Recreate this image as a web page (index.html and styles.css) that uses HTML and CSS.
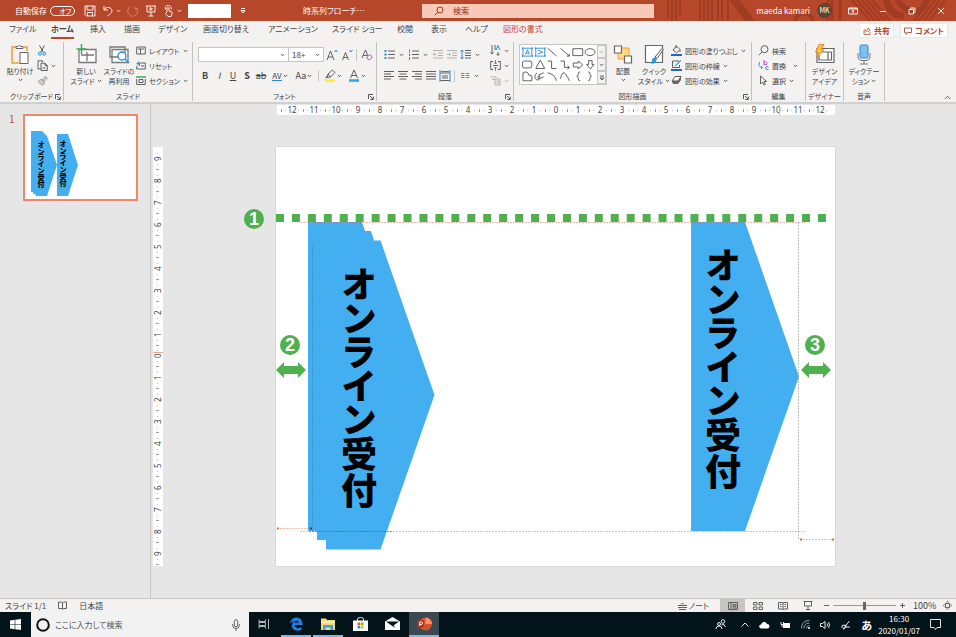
FILE: index.html
```html
<!DOCTYPE html>
<html lang="ja">
<head>
  <meta charset="UTF-8" />
  <meta name="viewport" content="width=device-width, initial-scale=1.0" />
  <title>時系列フローチャート - PowerPoint</title>
  <link rel="stylesheet" href="styles.css">
</head>
<body>
  <!-- shared icons -->
  <svg class="defs" aria-hidden="true">
    <symbol id="chev" viewBox="0 0 5 4"><path d="M.8 1 2.5 2.7 4.2 1" fill="none" stroke="currentColor" stroke-width=".9"/></symbol>
    <symbol id="launch" viewBox="0 0 6 6"><path d="M.5 5V.5H5M2 2l3 3M5.3 2.5v3h-3" fill="none" stroke="#444" stroke-width=".9"/></symbol>
    <symbol id="arrow" viewBox="0 0 30 16"><path d="M0 8 8 0v4h14V0l8 8-8 8v-4H8v4z" fill="#4fb04f"/></symbol>
  </svg>

  <header class="titlebar">
    <svg class="deco" viewBox="0 0 300 21" preserveAspectRatio="xMaxYMid slice" aria-hidden="true">
      <g fill="none" stroke="#a03c22" stroke-width="2">
        <path d="M12 0v18M16 0v21M20 0v21M24 0v15M44 0v21M48 0v21M52 0v21M56 0v21M62 0v21M66 0v21M72 0v21"/>
        <path d="M76 0 92 21M81 0 97 21" stroke-width="4"/>
        <circle cx="148" cy="22" r="9" stroke-width="4"/>
        <path d="M172 0v21M176 0v21M184 0v21" stroke-width="3"/>
        <path d="M196 0l18 21M201 0l18 21M206 0l18 21M211 0l18 21M216 0l18 21M258 21l16-21M263 21l16-21M268 21l16-21M273 21l16-21"/>
        <path d="M230 0q4 16 18 16" stroke-width="7"/><path d="M241 0q20 24 30 0" stroke-width="6"/>
      </g>
    </svg>
    <div class="quick">
      <label class="autosave">自動保存
        <input type="checkbox"><span class="switch">オフ</span>
      </label>
      <button aria-label="上書き保存"><svg width="12" height="12" viewBox="0 0 12 12"><path d="M1 1h10v10H2.500L1 9.500zM3 1v4h6V1M3.500 11V7.500h5V11" class="w"/></svg></button>
      <button class="drop" aria-label="元に戻す"><svg width="12" height="12" viewBox="0 0 12 12"><path d="M2 1v4h4M2 5c2-4 8-3 8 1 0 2-2 3-4.500 5" class="w"/></svg><svg class="chev"><use href="#chev"/></svg></button>
      <button class="dim" aria-label="やり直し"><svg width="12" height="12" viewBox="0 0 12 12"><path d="M8 1.500V4h3M9 2.500A5 5 0 1 1 3 2" class="w"/></svg></button>
      <button aria-label="スライドショー"><svg width="12" height="12" viewBox="0 0 12 12"><path d="M1 1h10M2 1v6h8V1M6 7v4M3.500 11h5M5 2.500v3L7.500 4z" class="w"/></svg></button>
      <button class="drop" aria-label="タッチ"><svg width="12" height="12" viewBox="0 0 12 12"><path d="M4 7V3q1-1 2 0v3l3 1v2l-1 2.500H5L2.500 8.500zM2.500 4.500A3 3 0 1 1 8 4.500" class="w"/></svg><svg class="chev"><use href="#chev"/></svg></button>
      <input class="quick-box" type="text" aria-label="フォント サイズ">
      <button class="quick-more" aria-label="クイック アクセスのユーザー設定"><svg width="6" height="6" viewBox="0 0 6 6"><path d="M1 .5h4M1 2.500h4L3 5z" class="w"/></svg></button>
    </div>
    <div class="doc-title">時系列フローチ…</div>
    <label class="search">
      <svg width="10" height="10" viewBox="0 0 10 10"><path d="M.8 9.200 4 6" stroke="#a33a22"/><circle cx="6" cy="4" r="3" fill="none" stroke="#a33a22"/></svg>
      <input type="search" placeholder="検索">
    </label>
    <div class="account">
      <span>maeda kamari</span>
      <span class="avatar">MK</span>
    </div>
    <div class="window-buttons">
      <button aria-label="リボンの表示オプション"><svg width="10" height="8" viewBox="0 0 10 8"><path d="M.5 1h9v6h-9zM.5 2h9M5 6V3.500M3.700 4.700 5 3.500l1.300 1.200" class="w"/></svg></button>
      <button aria-label="最小化"><svg width="8" height="8" viewBox="0 0 8 8"><path d="M1 4.500h6" class="w"/></svg></button>
      <button aria-label="元に戻す"><svg width="8" height="8" viewBox="0 0 8 8"><path d="M1 2.500h4.500V7H1zM2.500 2.500V1H7v4.500H5.500" class="w"/></svg></button>
      <button aria-label="閉じる"><svg width="8" height="8" viewBox="0 0 8 8"><path d="m1 1 6 6M7 1 1 7" class="w"/></svg></button>
    </div>
  </header>

  <nav class="tabs">
    <div class="tab-list">
      <button>ファイル</button>
      <button class="active">ホーム</button>
      <button>挿入</button>
      <button>描画</button>
      <button>デザイン</button>
      <button>画面切り替え</button>
      <button>アニメーション</button>
      <button>スライド ショー</button>
      <button>校閲</button>
      <button>表示</button>
      <button>ヘルプ</button>
      <button class="context">図形の書式</button>
    </div>
    <div class="tab-actions">
      <button><svg width="8" height="8" viewBox="0 0 8 8"><path d="M3 3H1v4.500h6V5M2.500 5.500C3 3 4 2.500 5 2.500V1l2.300 2L5 5V3.800" fill="none" stroke="#b7472a" stroke-width=".8"/></svg>共有</button>
      <button><svg width="8" height="8" viewBox="0 0 8 8"><path d="M.5 1h7v4.500h-4l-1.500 2v-2H.5z" fill="none" stroke="#b7472a" stroke-width=".9"/></svg>コメント</button>
    </div>
  </nav>

  <section class="ribbon">
    <div class="group">
      <div class="group-body clipboard">
        <button class="big"><svg width="20" height="21" viewBox="0 0 20 21"><path d="M6 3H2v16h8M14 3h3v4" fill="none" stroke="#f0a030" stroke-width="1.500"/><path d="M6 4.500V2.500h2q1-2.500 3 0h2v2z" fill="#fff" stroke="#666"/><path d="M10 8.500h8v11h-8z" fill="#fff" stroke="#666"/></svg>貼り付け<svg class="chev"><use href="#chev"/></svg></button>
        <div class="stack">
          <button aria-label="切り取り"><svg width="10" height="11" viewBox="0 0 10 11"><path d="m2.500.5 4 7M7.500.5l-4 7" stroke="#555"/><circle cx="2.800" cy="8.700" r="1.500" fill="none" stroke="#2b88d8"/><circle cx="7.200" cy="8.700" r="1.500" fill="none" stroke="#2b88d8"/></svg></button>
          <button aria-label="コピー"><svg width="11" height="11" viewBox="0 0 11 11"><path d="M4 9H1V.8h4.500V2M4 3.200h4l2.300 2.300v5H4zM8 3.500v2h2M5.500 8h3" class="l"/></svg><svg class="chev"><use href="#chev"/></svg></button>
          <button aria-label="書式のコピー"><svg width="11" height="10" viewBox="0 0 11 10"><path d="M1 5.500 4 3l4 4-3 2.500zM5 4l3-3.500L10.500 2 7.500 5.500z" fill="#ccc" stroke="#999" stroke-width=".8"/></svg></button>
        </div>
      </div>
      <div class="group-label">クリップボード<svg class="launch"><use href="#launch"/></svg></div>
    </div>

    <div class="group">
      <div class="group-body slides">
        <button class="big"><svg width="21" height="21" viewBox="0 0 21 21"><path d="M3 5.500h17v13H3zM5 11h13M11 8v9" fill="#fff" stroke="#777" stroke-width="1.300"/><path d="M5.500 0v10M.5 5h10" stroke="#3cae5c" stroke-width="1.500"/></svg>新しい<span>スライド <svg class="chev"><use href="#chev"/></svg></span></button>
        <button class="big"><svg width="21" height="21" viewBox="0 0 21 21"><path d="M1 3h15v10H1zM3 5.500h16v13H3z" fill="#fff" stroke="#777" stroke-width="1.300"/><circle cx="13" cy="12" r="4" fill="#fff" stroke="#2b88d8" stroke-width="1.300"/><path d="m16 15 4 4" stroke="#2b88d8" stroke-width="1.500"/></svg>スライドの<span>再利用</span></button>
        <div class="stack">
          <button><svg width="10" height="9" viewBox="0 0 10 9"><path d="M.7 1h8.600v7H.7zM2 3h6M4.500 3v5" class="l"/></svg>レイアウト<svg class="chev"><use href="#chev"/></svg></button>
          <button><svg width="10" height="9" viewBox="0 0 10 9"><path d="M3 2h6.300v6H.7V5M5 5h3" class="l"/><path d="M3 .5.800 2.500 3 4.500M1 2.500h2.500V5" fill="none" stroke="#2b88d8"/></svg>リセット</button>
          <button><svg width="10" height="9" viewBox="0 0 10 9"><path d="M0 1h10" stroke="#3cae5c" stroke-width="1.500"/><path d="M.7 3v5.500h8.600V3M3 3.500h4v3H3z" class="l"/></svg>セクション<svg class="chev"><use href="#chev"/></svg></button>
        </div>
      </div>
      <div class="group-label">スライド</div>
    </div>

    <div class="group">
      <div class="group-body rows">
        <div class="row">
          <div class="combo font-name"><select aria-label="フォント"><option></option></select><svg class="chev"><use href="#chev"/></svg></div>
          <div class="combo font-size"><select aria-label="フォント サイズ"><option>18+</option></select><svg class="chev"><use href="#chev"/></svg></div>
          <button class="glyph" aria-label="拡大"><svg width="12" height="12" viewBox="0 0 12 12"><path d="M1 11 4.500 2 8 11M2.200 8h4.600" class="l"/><path d="m8.500 3 1.500-2 1.500 2" fill="none" stroke="#2b88d8"/></svg></button>
          <button class="glyph" aria-label="縮小"><svg width="12" height="12" viewBox="0 0 12 12"><path d="M1.500 11 4.500 3.500 7.500 11M2.600 8.500h3.800" class="l"/><path d="m8.500 1 1.500 2 1.500-2" fill="none" stroke="#2b88d8"/></svg></button>
          <i class="bar"></i>
          <button class="glyph" aria-label="書式のクリア"><svg width="12" height="12" viewBox="0 0 12 12"><path d="M1 9 4.500 1 7 7M2.200 6.500H6" class="l"/><path d="m5.500 9 3-3.500L11.300 8l-3 3z" fill="#fff" stroke="#b146c2"/></svg></button>
        </div>
        <div class="row second">
          <button class="fmt"><b>B</b></button>
          <button class="fmt"><i>I</i></button>
          <button class="fmt"><u>U</u></button>
          <button class="fmt"><b>S</b></button>
          <button class="fmt"><s>ab</s></button>
          <button class="fmt wide"><span class="spacing">AV</span><svg class="chev"><use href="#chev"/></svg></button>
          <button class="fmt wide">Aa<svg class="chev"><use href="#chev"/></svg></button>
          <i class="bar"></i>
          <button class="fmt wide" aria-label="蛍光ペン"><svg width="12" height="13" viewBox="0 0 12 13"><path d="M3 8.500 4 5l4.500-4L11 3.500 6.500 8zM4 5l2.500 3M1.500 9.500 3 7" class="l"/><path d="M1 11.500h10" stroke="#ffee22" stroke-width="2.500"/></svg><svg class="chev"><use href="#chev"/></svg></button>
          <button class="fmt wide" aria-label="フォントの色"><svg width="12" height="13" viewBox="0 0 12 13"><path d="M2.500 9 6 1l3.500 8M3.700 6.500h4.600" class="l"/><path d="M1 11.500h10" stroke="#2ea3ef" stroke-width="2.500"/></svg><svg class="chev"><use href="#chev"/></svg></button>
        </div>
      </div>
      <div class="group-label">フォント<svg class="launch"><use href="#launch"/></svg></div>
    </div>

    <div class="group">
      <div class="group-body paragraph">
        <div class="rows">
          <div class="row">
            <button class="par drop" aria-label="箇条書き"><svg width="11" height="11" viewBox="0 0 11 11"><path d="M4 2h7M4 5.500h7M4 9h7" class="l"/><path d="M.5 2h2M.5 5.500h2M.5 9h2" stroke="#2b88d8" stroke-width="2"/></svg><svg class="chev"><use href="#chev"/></svg></button>
            <button class="par drop" aria-label="段落番号"><svg width="11" height="11" viewBox="0 0 11 11"><path d="M4 2h7M4 5.500h7M4 9h7" class="l"/><path d="M1.500.5v3M1.500 4.500v2.500M1.500 8v3" stroke="#2b88d8"/></svg><svg class="chev"><use href="#chev"/></svg></button>
            <button class="par off" aria-label="インデントを減らす"><svg width="11" height="11" viewBox="0 0 11 11"><path d="M1 1.500h10M6 4h5M6 6.500h5M1 9h10M4.500 5.300H1M2.500 4 1 5.300l1.500 1.300" class="g"/></svg></button>
            <button class="par off" aria-label="インデントを増やす"><svg width="11" height="11" viewBox="0 0 11 11"><path d="M1 1.500h10M6 4h5M6 6.500h5M1 9h10M1 5.300h3.500M3 4l1.500 1.300L3 6.600" class="g"/></svg></button>
            <button class="par drop" aria-label="行間"><svg width="11" height="11" viewBox="0 0 11 11"><path d="M5 1.500h6M5 4h6M5 6.500h6M5 9h6" class="l"/><path d="M2 1v9M.5 2.500 2 1l1.500 1.500M.5 8.500 2 10l1.500-1.500" fill="none" stroke="#2b88d8"/></svg><svg class="chev"><use href="#chev"/></svg></button>
          </div>
          <div class="row second">
            <button class="par" aria-label="左揃え"><svg width="10" height="11" viewBox="0 0 10 11"><path d="M0 1.500h10M0 4h7M0 6.500h10M0 9h7" class="l"/></svg></button>
            <button class="par" aria-label="中央揃え"><svg width="10" height="11" viewBox="0 0 10 11"><path d="M0 1.500h10M1.500 4h7M0 6.500h10M1.500 9h7" class="l"/></svg></button>
            <button class="par" aria-label="右揃え"><svg width="10" height="11" viewBox="0 0 10 11"><path d="M0 1.500h10M3 4h7M0 6.500h10M3 9h7" class="l"/></svg></button>
            <button class="par" aria-label="両端揃え"><svg width="10" height="11" viewBox="0 0 10 11"><path d="M0 1.500h10M0 4h10M0 6.500h10M0 9h10" class="l"/></svg></button>
            <button class="par" aria-label="均等割り付け"><svg width="12" height="12" viewBox="0 0 12 12"><path d="M1 0v12M11 0v12" stroke="#2b88d8"/><path d="M1.500 3h9M3 6h6M3 8h6M1.500 10.500h9" class="l"/><path d="M2 1.500h8" stroke="#2b88d8"/></svg></button>
            <i class="bar"></i>
            <button class="par drop" aria-label="段組み"><svg width="10" height="11" viewBox="0 0 10 11"><path d="M1 3.500h3.500M5.800 3.500h3.500M1 5.500h3.500M5.800 5.500h3.500M1 7.500h3.500M5.800 7.500h3.500" stroke="#2b88d8" stroke-width=".9"/></svg><svg class="chev"><use href="#chev"/></svg></button>
          </div>
        </div>
        <div class="stack">
          <button aria-label="文字列の方向"><svg width="11" height="11" viewBox="0 0 11 11"><path d="M2 0v9M.5 7.500 2 9l1.500-1.500M5 0v5M8 7v3M6.500 9 8 10.500 9.500 9" class="l"/><path d="M6 5 8 .5 10 5" fill="none" stroke="#2b88d8"/></svg><svg class="chev"><use href="#chev"/></svg></button>
          <button aria-label="文字の配置"><svg width="11" height="11" viewBox="0 0 11 11"><path d="M3 1.500H.7v8H3M8 1.500h2.300v8H8M3 5.500h5" class="l"/><path d="M5.500 0v4M4 2.500l1.500 1.500L7 2.500M5.500 11V7M4 8.500 5.500 7 7 8.500" fill="none" stroke="#2b88d8" stroke-width=".9"/></svg><svg class="chev"><use href="#chev"/></svg></button>
          <button class="off" aria-label="SmartArt に変換"><svg width="11" height="11" viewBox="0 0 11 11"><path d="M.5 2h6M2 4.500h3M5 4h5v6H5zM6.500 6h3M6.500 8h3" class="g"/></svg><svg class="chev"><use href="#chev"/></svg></button>
        </div>
      </div>
      <div class="group-label">段落<svg class="launch"><use href="#launch"/></svg></div>
    </div>

    <div class="group">
      <div class="group-body drawing">
        <div class="gallery">
          <svg class="shapes" viewBox="0 0 78 39" aria-label="図形">
            <g fill="none" stroke="#2b88d8" stroke-width=".9"><path d="M3 3h9v8H3zM16 3h9v8h-9zM5.500 9.500 7.500 4.500l2 5M6.200 8h2.600M18 5l5 2-5 2"/><path d="M2 3h1M12 3h1M2 11h1M12 11h1M15 3h1M25 3h1M15 11h1M25 11h1" stroke-width="2"/></g>
            <g fill="none" stroke="#505050" stroke-width=".9">
              <path d="m28 3 9 8M41 3l9 8M47.500 11H50V8.500M53.500 3.500h10v7h-10z"/><ellipse cx="71" cy="7" rx="5" ry="3.500"/>
              <rect x="2.500" y="16" width="9.500" height="7" rx="2"/><path d="M20.500 15 25 23.500h-9zM28 16h4v7.500h5M41 16h4v6.500h5M48 20.500l2 2-2 2M54 18h5v-2l4.500 4-4.500 4v-2h-5zM69.500 15.500h3.500v4h2L71.200 24l-3.700-4.500h2z"/>
              <path d="M3 28q3-2 5 0 0 3 4 3v5H3zM17 28q-4 5 0 7 3 1 3-3 0-4-2 1 0 2 6-1M19 30l5-2M28 28q7 1 9 8M41 34q2-9 5-5t4 7M61 27q-2 0-2 2v1q0 1-1.500 1.500 1.500.5 1.500 1.500v1q0 2 2 2M69 27q2 0 2 2v1q0 1 1.500 1.500-1.500.5-1.500 1.500v1q0 2-2 2"/>
            </g>
          </svg>
          <div class="gallery-scroll">
            <button class="off" aria-label="上へ"><svg class="chev flip"><use href="#chev"/></svg></button>
            <button aria-label="下へ"><svg class="chev"><use href="#chev"/></svg></button>
            <button aria-label="その他"><svg width="6" height="6" viewBox="0 0 6 6"><path d="M1 1h4M1 3h4L3 5z" class="l"/></svg></button>
          </div>
        </div>
        <button class="big"><svg width="20" height="21" viewBox="0 0 20 21"><path d="M5 4h11v11H5z" fill="#ffd98a" stroke="#f0a030"/><path d="M1.500 2h7v7h-7zM11.500 12h7v7h-7z" fill="#fff" stroke="#666" stroke-width="1.200"/></svg>配置<svg class="chev"><use href="#chev"/></svg></button>
        <button class="big"><svg width="21" height="21" viewBox="0 0 21 21"><path d="M1.500 1.500h17v17h-17z" fill="#fff" stroke="#666" stroke-width="1.200"/><path d="m11 13 7-8.500 1.500 1-6.500 9z" fill="#fff" stroke="#555"/><path d="M6 19q2 0 2-3t3-2.500 1 4-6 1.500z" fill="#2b9be8"/></svg>クイック<span>スタイル <svg class="chev"><use href="#chev"/></svg></span></button>
        <div class="stack">
          <button><svg width="11" height="11" viewBox="0 0 11 11"><path d="m2 5 3.500-4L9 4.500 5.500 8zM5 0v3M9 5v2" class="l"/><path d="M0 10h11" stroke="#2266cc" stroke-width="2"/></svg>図形の塗りつぶし<svg class="chev"><use href="#chev"/></svg></button>
          <button><svg width="11" height="11" viewBox="0 0 11 11"><path d="M8 1H1.500v6.500h7V5M4 6 9.500.8" class="l"/><path d="m4 6 6-5.500" stroke="#2b9be8"/><path d="M0 10h11" stroke="#2266cc" stroke-width="2"/></svg>図形の枠線<svg class="chev"><use href="#chev"/></svg></button>
          <button><svg width="11" height="11" viewBox="0 0 11 11"><path d="M1 6.500 4 2h6v3L7 9H2z" fill="#666"/><path d="M1 6 4 1.500h6L7 6z" fill="#fff" stroke="#555"/></svg>図形の効果<svg class="chev"><use href="#chev"/></svg></button>
        </div>
      </div>
      <div class="group-label">図形描画<svg class="launch"><use href="#launch"/></svg></div>
    </div>

    <div class="group">
      <div class="group-body editing">
        <div class="stack">
          <button><svg width="11" height="11" viewBox="0 0 11 11"><circle cx="6.500" cy="4.200" r="3.500" class="l"/><path d="M4 7 .8 10.200" class="l"/></svg>検索</button>
          <button><svg width="11" height="11" viewBox="0 0 11 11"><path d="M6 0v5M6 3q3-2 3 .5T6 4.500" fill="none" stroke="#b146c2" stroke-width=".9"/><path d="M1.500 2q-2 5 3 5.500M3 6l1.500 1.500L3 9M10.500 7q-3-1-3 1t3 1.500" fill="none" stroke="#2b88d8" stroke-width=".9"/></svg>置換<svg class="chev far"><use href="#chev"/></svg></button>
          <button><svg width="11" height="11" viewBox="0 0 11 11"><path d="M2.500 1v8l2-2 1.500 3 1.300-.7L6 6.500h2.700z" class="l"/></svg>選択<svg class="chev"><use href="#chev"/></svg></button>
        </div>
      </div>
      <div class="group-label">編集</div>
    </div>

    <div class="group">
      <div class="group-body single">
        <button class="big"><svg width="21" height="21" viewBox="0 0 21 21"><path d="M3 4.500h17v14H3zM5 8h12.500v8H5zM14 8v8" fill="#fff" stroke="#666" stroke-width="1.200"/><path d="M5 .5 1.500 8h3l-2.500 6L10 6H7l3-5.500z" fill="#ffc83d" stroke="#ee8822"/></svg>デザイン<span>アイデア</span></button>
      </div>
      <div class="group-label">デザイナー</div>
    </div>

    <div class="group">
      <div class="group-body single">
        <button class="big"><svg width="16" height="21" viewBox="0 0 16 21"><rect x="4" y="1" width="8" height="13" rx="1.500" fill="#83beec" stroke="#2b88d8"/><path d="M2 9v4q0 3.500 4 3.500h4q4 0 4-3.500V9M8 17v3M4 20h8" fill="none" stroke="#777"/></svg>ディクテー<span>ション <svg class="chev"><use href="#chev"/></svg></span></button>
      </div>
      <div class="group-label">音声</div>
    </div>
    <button class="collapse" aria-label="リボンを折りたたむ"><svg width="7" height="5" viewBox="0 0 7 5"><path d="m.8 4 2.700-2.700L6.200 4" class="l"/></svg></button>
  </section>

  <main class="workspace">
    <aside class="thumbs">
      <span class="thumb-number">1</span>
      <svg class="thumb" viewBox="0 0 111 83">
        <g fill="#44aff0"><path d="M6 15h11l5 5 10 29-10 31H11l-1-2H8v-2H6zM32 18h11l10 31-10 31H32z"/></g>
        <text class="thumb-text" x="16" y="25">オンライン受付</text>
        <text class="thumb-text" x="38" y="24">オンライン受付</text>
      </svg>
    </aside>
    <div class="editor">
      <div class="ruler ruler-h" id="ruler-h"></div>
      <div class="canvas-row">
        <div class="canvas">
          <div class="ruler ruler-v" id="ruler-v"></div>
          <div class="slide">
            <svg viewBox="0 0 559 419">
              <g fill="#44aff0">
                <path d="M32 75h54l3 9h6l3 9.500h6.500l54 154.500-54 154.500H50V393h-9v-9h-9z"/>
                <path d="M415 75h54l54 154.500L469 384h-54z"/>
              </g>
              <text class="shape-text" x="83" y="120">オンライン受付</text>
              <text class="shape-text" x="447" y="101">オンライン受付</text>
              <!-- smart guides -->
              <g fill="none" stroke-dasharray="2 1">
                <path d="M24 75.500h505M24 384.500h505M1 381.500h34M524 392.500h34" stroke="#e8664a" opacity=".45"/>
                <path d="M36.500 98v286" stroke="#286f8a" opacity=".4"/>
                <path d="M33 384.500h84" stroke="#286f8a" opacity=".6"/>
                <path d="M522.500 75v318" stroke="#999" opacity=".6"/>
              </g>
              <path d="M1 380.500h2v2H1zM524 391.500h2v2h-2zM556 391.500h2v2h-2z" fill="#e8664a"/>
              <path d="M34 380.500h2v2h-2z" fill="#444"/>
              <path d="M0 71h551" stroke="#4fb04f" stroke-width="8" stroke-dasharray="8 7.940"/>
              <g fill="#4fb04f"><circle cx="-22" cy="72" r="10"/><circle cx="14" cy="198" r="10"/><circle cx="539" cy="198" r="10"/></g>
              <g class="marker"><text x="-22" y="78">1</text><text x="14" y="204">2</text><text x="539" y="204">3</text></g>
              <use href="#arrow" x="0" y="215" width="30" height="16"/>
              <use href="#arrow" x="525" y="215" width="30" height="16"/>
            </svg>
          </div>
        </div>
      </div>
    </div>
  </main>

  <footer class="status">
    <span>スライド 1/1</span>
    <svg width="9" height="9" viewBox="0 0 9 9"><path d="M4.500 2v6.500M.5 1h3l1 1 1-1h3v6.500h-3l-1 1-1-1h-3z" class="l"/></svg>
    <span>日本語</span>
    <div class="status-right">
      <button class="notes"><svg width="9" height="8" viewBox="0 0 9 8"><path d="M0 3.500h9M0 5.500h9M1 7.500h7M3 2.500 4.500 1 6 2.500" class="l"/></svg>ノート</button>
      <button class="view active" aria-label="標準"><svg width="10" height="8" viewBox="0 0 10 8"><path d="M.5.5h9v7h-9zM3 .5v7M5 2.500h3v2H5zM4.500 6h4" class="l"/></svg></button>
      <button class="view" aria-label="スライド一覧"><svg width="10" height="8" viewBox="0 0 10 8"><path d="M.5.500h3.500v2.500H.5zM6 .500h3.500v2.500H6zM.5 5h3.500v2.500H.5zM6 5h3.500v2.500H6z" class="l"/></svg></button>
      <button class="view" aria-label="閲覧表示"><svg width="10" height="8" viewBox="0 0 10 8"><path d="M.5.500H4l1 .5 1-.5h3.500v6.500H6L5 7.500 4 7H.5zM5 1v6.500M2 2.500h1.500M2 4.500h1.500M6.500 2.500H8M6.500 4.500H8" class="l"/></svg></button>
      <button class="view" aria-label="スライド ショー"><svg width="10" height="9" viewBox="0 0 10 9"><path d="M.5.500h9M1.500.500v4.500h7V.5M5 5v3.500M3 8.500h4" class="l"/></svg></button>
      <button class="step" aria-label="縮小"><svg width="5" height="5" viewBox="0 0 5 5"><path d="M0 2.500h5" class="l"/></svg></button>
      <input class="zoom" type="range" min="0" max="100" value="50" aria-label="ズーム">
      <button class="step" aria-label="拡大"><svg width="5" height="5" viewBox="0 0 5 5"><path d="M0 2.500h5M2.500 0v5" class="l"/></svg></button>
      <span class="percent">100%</span>
      <button class="fit" aria-label="ウィンドウに合わせる"><svg width="9" height="9" viewBox="0 0 9 9"><path d="M2.500 2.500h4v4h-4zM3.300 1.500 4.500.3l1.200 1.200M3.300 7.500l1.200 1.200 1.200-1.200M1.500 3.300.3 4.500l1.200 1.200M7.500 3.300l1.200 1.200-1.200 1.200" class="l"/></svg></button>
    </div>
  </footer>

  <div class="taskbar">
    <button class="start" aria-label="スタート"><svg width="11" height="11" viewBox="0 0 11 11"><path d="m0 1.500 4.700-.7v4.400H0zM5.300.7 11 0v5.200H5.300zM0 5.800h4.700v4.400L0 9.500zM5.300 5.800H11V11l-5.700-.7z" fill="#fff"/></svg></button>
    <label class="task-search">
      <svg width="14" height="14" viewBox="0 0 14 14"><circle cx="7" cy="7" r="5.800" fill="none" stroke="#111" stroke-width="2"/></svg>
      <input type="search" placeholder="ここに入力して検索">
      <svg width="8" height="12" viewBox="0 0 8 12"><rect x="2.300" y=".7" width="3.400" height="7" rx="1.700" class="l"/><path d="M.7 5v1.500q0 3 3.300 3t3.300-3V5M4 9.500V12" class="l"/></svg>
    </label>
    <div class="apps">
      <button aria-label="タスク ビュー"><svg width="12" height="10" viewBox="0 0 12 10"><path d="M1 .500v2h6.500v-2M1 9.500v-2h6.500v2M1 3.500h6.500v3H1zM10.500 0v10M10 2.500h1" fill="none" stroke="#ddd" stroke-width=".8"/></svg></button>
      <button class="open" aria-label="Edge"><svg width="14" height="14" viewBox="0 0 14 14"><path d="M1 7C1.500 2.500 4.200.5 7.500.5c4 0 6 3 6 7.500h-8c.2 3 4 4 7 2.300v2.500C8 15 2.800 13 2.800 8.800 2.800 6.500 4 5 5.500 4.300 3.500 4.300 2 5.300 1 7zM5.500 5.800h4.200C9.700 3 6 3 5.500 5.800z" fill="#1e7fe0"/></svg></button>
      <button class="open" aria-label="エクスプローラー"><svg width="14" height="12" viewBox="0 0 14 12"><path d="M0 .5h5l1 1.500h8v10H0z" fill="#f8d775"/><path d="M0 3.500h14V5H0z" fill="#fff0b8"/><path d="M2 12V7h10v5H9.500V9.500h-5V12z" fill="#35a4e8"/></svg></button>
      <button aria-label="ストア"><svg width="15" height="14" viewBox="0 0 15 14"><path d="M4.500 4V2q0-1.500 3-1.500t3 1.500v2" fill="none" stroke="#ddd"/><path d="M0 3.500h15V14H0z" fill="#fff"/><path d="M4.500 5.500h2.700v2.700H4.500z" fill="#f25022"/><path d="M7.800 5.500h2.700v2.700H7.800z" fill="#7fba00"/><path d="M4.500 8.800h2.700v2.700H4.500z" fill="#00a4ef"/><path d="M7.800 8.800h2.700v2.700H7.800z" fill="#ffb900"/></svg></button>
      <button aria-label="メール"><svg width="15" height="13" viewBox="0 0 15 13"><path d="M0 4.500 7.500 0 15 4.500V13H0z" fill="#fff"/><path d="M1 4.500h13L8.500 8.500l2 2.500-4-2.500z" fill="#02131a"/></svg></button>
      <button class="open current" aria-label="PowerPoint"><svg width="15" height="14" viewBox="0 0 15 14"><circle cx="8.500" cy="7" r="6.500" fill="#d35230"/><path d="M8.500.5A6.500 6.500 0 0 1 15 7H8.500z" fill="#ff8f6b"/><rect y="3.500" width="7" height="7" rx="1" fill="#b7341c"/><path d="M2.700 9V5h1.500q1.300 0 1.300 1.200T4.200 7.500H2.700" fill="none" stroke="#fff" stroke-width=".9"/></svg></button>
    </div>
    <div class="tray">
      <button class="people" aria-label="People"><svg width="11" height="11" viewBox="0 0 11 11"><circle cx="8" cy="2.500" r="1.800" class="w"/><circle cx="4" cy="5" r="1.500" class="w"/><path d="M1 10q0-3 3-3t3 3M6.500 6q3-2 4 2" class="w"/></svg></button>
      <button aria-label="隠れているインジケーター"><svg width="8" height="5" viewBox="0 0 8 5"><path d="m.5 4.500 3.500-3.500L7.500 4.500" class="w"/></svg></button>
      <button aria-label="OneDrive"><svg width="11" height="8" viewBox="0 0 11 8"><path d="M2.500 7.500a2 2 0 0 1-.5-4Q3 .5 5.500 1q2 0 2.500 2 2.500 0 2.500 2.300 0 2.200-2 2.200z" fill="#fff"/></svg></button>
      <button aria-label="バッテリー"><svg width="11" height="8" viewBox="0 0 11 8"><path d="M3 2h7v5H3z" fill="#fff"/><path d="M1 1v2.500h2.500V1M2 3.500V6" class="w"/></svg></button>
      <button aria-label="ネットワーク"><svg width="9" height="9" viewBox="0 0 9 9"><path d="M.5 8.500q0-8 8-8M3 8.500Q3 3 8.500 3M5.500 8.500q0-3 3-3" fill="none" stroke="#999"/><circle cx="8" cy="8" r="1" fill="#fff"/></svg></button>
      <button aria-label="音量"><svg width="11" height="8" viewBox="0 0 11 8"><path d="M.5 2.500h2L5 .5v7L2.500 5.500h-2zM7 2.500q1 1.500 0 3M8.500 1q2 3 0 6" class="w"/></svg></button>
      <button aria-label="ペン"><svg width="10" height="10" viewBox="0 0 10 10"><path d="M1 8q-1-3 2-3t2 2-3 2L8.500 1M5 7h4" class="w"/></svg></button>
      <button class="ime">あ</button>
      <div class="clock"><span>16:30</span><span>2020/01/07</span></div>
      <button aria-label="アクション センター"><svg width="11" height="11" viewBox="0 0 11 11"><path d="M.5.500h10v8H7L5.500 10.500 4 8.500H.5z" class="w"/></svg></button>
    </div>
  </div>

  <script>
    function buildRuler(id, max) {
      const ruler = document.getElementById(id);
      for (let i = -max; i <= max; i++) {
        const cell = document.createElement('span');
        cell.innerText = Math.abs(i);
        ruler.appendChild(cell);
      }
    }

    buildRuler('ruler-h', 12);
    buildRuler('ruler-v', 9);
  </script>
</body>
</html>
```
FILE: styles.css
```css
* {
  box-sizing: border-box;
}
body {
  margin: 0;
  height: 100vh;
  display: flex;
  flex-direction: column;
  overflow: hidden;
  background-color: #e6e6e6;
  color: #444;
  font-family: 'Noto Sans CJK JP', 'Noto Sans', sans-serif;
  font-size: 8px;
  line-height: 10px;
  font-feature-settings: 'palt';
}
button, input, select {
  font: inherit;
  font-feature-settings: inherit;
  color: inherit;
  background: none;
  border: none;
  border-radius: 0;
  padding: 0;
  margin: 0;
  min-width: 0;
  outline: none;
}
button {
  display: flex;
  align-items: center;
  justify-content: center;
  white-space: nowrap;
}
svg {
  display: block;
  flex: none;
}
.defs {
  position: absolute;
  width: 0;
  height: 0;
}
.w {
  fill: none;
  stroke: #fff;
  stroke-width: 0.9;
}
.l {
  fill: none;
  stroke: #505050;
  stroke-width: 0.9;
}
.g {
  fill: none;
  stroke: #aaa;
  stroke-width: 0.9;
}
.chev {
  width: 5px;
  height: 4px;
}
.far {
  margin-left: 4px;
}
.flip {
  transform: rotate(180deg);
}
.off {
  color: #aaa;
}

/* title bar */
.titlebar {
  position: relative;
  display: flex;
  align-items: center;
  flex: none;
  height: 21px;
  background-color: #b7472a;
  color: #fff;
}
.deco {
  position: absolute;
  right: 0;
  top: 0;
  width: 300px;
  height: 21px;
}
.quick {
  display: flex;
  align-items: center;
  gap: 6px;
  width: 303px;
  padding-left: 15px;
}
.quick .drop {
  gap: 2px;
}
.quick-more {
  margin-left: 3px;
}
.dim {
  opacity: 0.35;
}
.autosave {
  display: flex;
  align-items: center;
  gap: 3px;
  margin-right: 3px;
  white-space: nowrap;
}
.autosave input {
  position: absolute;
  opacity: 0;
}
.switch {
  display: flex;
  align-items: center;
  gap: 5px;
  height: 10px;
  width: 25px;
  padding: 0 3px;
  border: 1px solid #fff;
  border-radius: 5px;
  font-size: 7px;
}
.switch::before {
  content: '';
  width: 4px;
  height: 4px;
  border-radius: 50%;
  background-color: #fff;
}
.quick-box {
  width: 43px;
  height: 14px;
  background-color: #fff;
}
.doc-title {
  width: 119px;
}
.search {
  display: flex;
  align-items: center;
  flex: 1;
  gap: 9px;
  height: 14px;
  padding-left: 12px;
  background-color: #f8c9b6;
}
.search input {
  flex: 1;
}
.search input::placeholder {
  color: #96341d;
  opacity: 1;
}
.account {
  position: relative;
  display: flex;
  align-items: center;
  justify-content: flex-end;
  gap: 7px;
  width: 178px;
}
.avatar {
  width: 15px;
  height: 15px;
  border-radius: 50%;
  background-color: #61442f;
  font-size: 7px;
  line-height: 15px;
  text-align: center;
}
.window-buttons {
  position: relative;
  display: flex;
  justify-content: space-between;
  width: 124px;
  padding: 0 11px 0 16px;
}

/* tabs */
.tabs {
  display: flex;
  justify-content: space-between;
  flex: none;
  height: 21px;
  background-color: #f3f2f1;
}
.tab-list {
  display: grid;
  grid-template-columns: 42px 39px 34px 34px 45px 65px 64px 65px 34px 34px 38px 50px;
  padding-left: 9px;
}
.tab-list button {
  justify-self: start;
  height: 18px;
  border-bottom: 2px solid transparent;
}
.tab-list .active {
  border-color: #b7472a;
  font-weight: bold;
}
.tab-list .context {
  color: #c8472b;
}
.tab-actions {
  display: flex;
  gap: 6px;
  padding: 2px 8px 4px 0;
}
.tab-actions button {
  gap: 3px;
  padding: 0 3px;
  background-color: #fff;
  border: 1px solid #eae8e6;
  color: #b7472a;
  font-weight: bold;
}

/* ribbon */
.ribbon {
  display: grid;
  grid-template-columns: 64px 129px 184px 137px 238px 54px 38px 41px 1fr;
  flex: none;
  height: 62px;
  background-color: #f3f2f1;
  border-bottom: 2px solid #cfcfcf;
}
.group {
  display: flex;
  flex-direction: column;
  margin-bottom: 1px;
  border-right: 1px solid #c4c2c0;
}
.group-body {
  display: flex;
  flex: 1;
}
.group-label {
  display: flex;
  justify-content: center;
  align-items: center;
  position: relative;
  height: 10px;
  font-size: 7px;
  white-space: nowrap;
}
.launch {
  position: absolute;
  right: 2px;
  bottom: 1px;
  width: 6px;
  height: 6px;
}
.big {
  flex-direction: column;
  justify-content: flex-start;
  width: 32px;
  padding-top: 2px;
  font-size: 7px;
}
.big > svg:first-child {
  margin-bottom: 1px;
}
.big > .chev {
  margin-top: 2px;
}
.big span {
  display: flex;
  align-items: center;
  gap: 2px;
}
.stack {
  display: flex;
  flex-direction: column;
  align-items: flex-start;
  padding-top: 1px;
  font-size: 7px;
}
.stack button {
  gap: 3px;
  height: 15px;
}
.clipboard {
  padding-left: 4px;
}
.slides {
  padding-left: 6px;
}
.clipboard, .slides, .drawing {
  gap: 1px;
}
.rows {
  flex-direction: column;
  padding-left: 5px;
}
.row {
  display: flex;
  align-items: center;
  height: 15px;
  margin-top: 5px;
}
.second {
  margin-top: 6px;
}
.combo {
  display: flex;
  align-items: center;
  height: 15px;
  padding: 0 3px;
  border: 1px solid #c8c6c4;
  background-color: #fff;
  font-size: 8px;
}
.combo select {
  appearance: none;
  flex: 1;
}
.font-name {
  width: 91px;
}
.font-size {
  width: 35px;
  border-left: none;
}
.glyph {
  width: 15px;
}
.bar {
  width: 1px;
  height: 12px;
  margin: 0 2px;
  background-color: #c8c6c4;
}
.fmt {
  width: 14px;
  font-size: 9px;
}
.wide {
  width: 24px;
  gap: 1px;
}
.spacing {
  border-bottom: 1px solid #2b88d8;
  font-size: 8px;
  line-height: 9px;
}
.paragraph .rows {
  width: 113px;
}
.par {
  width: 14px;
}
.par.drop {
  width: 24px;
  gap: 4px;
}
.gallery {
  display: flex;
  width: 88px;
  height: 41px;
  margin: 2px 0 0 5px;
  background-color: #fff;
  border: 1px solid #c8c6c4;
}
.shapes {
  flex: 1;
}
.gallery-scroll {
  display: flex;
  flex-direction: column;
  width: 9px;
}
.gallery-scroll button {
  flex: 1;
  background-color: #f3f2f1;
  border: 1px solid #c8c6c4;
}
.drawing .big {
  width: 30px;
}
.drawing .stack {
  margin-left: 1px;
}
.editing {
  padding-left: 6px;
}
.single {
  justify-content: center;
}
.collapse {
  align-self: end;
  justify-self: end;
  padding: 0 5px 2px 0;
}

/* workspace */
.workspace {
  display: flex;
  flex: 1;
  min-height: 0;
}
.thumbs {
  display: flex;
  align-items: flex-start;
  gap: 9px;
  width: 151px;
  padding: 10px 12px 0 9px;
  border-right: 1px solid #c8c8c8;
  color: #c8472b;
}
.thumb-number {
  width: 5px;
  font-size: 10px;
}
.thumb {
  flex: 1;
  background-color: #fff;
  border: 2px solid #f0866a;
}
.thumb-text {
  writing-mode: vertical-rl;
  font-size: 7px;
  font-weight: 900;
  font-feature-settings: 'vpal';
  fill: #000;
}
.editor {
  display: flex;
  flex-direction: column;
  flex: 1;
}
.ruler {
  position: relative;
  display: flex;
  background-color: #fff;
  font-family: 'Noto Sans', sans-serif;
  font-size: 8px;
}
/* cursor position marks */
.ruler::after {
  content: '';
  position: absolute;
  background-color: #f0a890;
}
.ruler span {
  flex: 1;
  display: flex;
  align-items: center;
  justify-content: center;
}
.ruler-h {
  height: 10px;
  margin: 1px 121px 0 126px;
  padding: 0 4px;
}
.ruler-h::after {
  left: 90%;
  width: 1px;
  height: 10px;
}
.ruler-h span {
  background:
    linear-gradient(#999, #999) 0 50% / 1px 3px no-repeat,
    linear-gradient(#bbb, #bbb) 20% 50% / 1px 1px no-repeat,
    linear-gradient(#bbb, #bbb) 82% 50% / 1px 1px no-repeat;
}
.ruler-v {
  flex-direction: column-reverse;
  width: 10px;
  padding: 1px 0;
}
.ruler-v::after {
  top: 49%;
  width: 10px;
  height: 1px;
}
.ruler-v span {
  writing-mode: vertical-rl;
  transform: rotate(180deg);
  background:
    linear-gradient(#999, #999) 50% 0 / 3px 1px no-repeat,
    linear-gradient(#bbb, #bbb) 50% 25% / 1px 1px no-repeat,
    linear-gradient(#bbb, #bbb) 50% 75% / 1px 1px no-repeat;
}
.canvas-row {
  display: flex;
  align-items: center;
  flex: 1;
}
.canvas {
  display: flex;
  flex: 1;
  gap: 113px;
  padding: 0 121px 0 2px;
}
.slide {
  flex: 1;
  background-color: #fff;
  outline: 1px solid #d8d8d8;
}
.slide svg {
  width: 100%;
  overflow: visible;
}
.shape-text {
  writing-mode: vertical-rl;
  font-size: 36px;
  font-weight: 900;
  font-feature-settings: 'vpal';
  fill: #000;
}
.marker {
  fill: #fff;
  font-family: 'Liberation Sans', sans-serif;
  font-size: 18px;
  font-weight: bold;
  text-anchor: middle;
}

/* status bar */
.status {
  display: flex;
  align-items: center;
  gap: 12px;
  flex: none;
  height: 14px;
  padding-left: 5px;
  background-color: #f3f2f1;
  border-top: 1px solid #c8c8c8;
}
.status-right {
  display: flex;
  align-items: center;
  align-self: stretch;
  margin-left: auto;
  padding-right: 4px;
}
.notes {
  gap: 2px;
  margin-right: 11px;
}
.view {
  align-self: stretch;
  width: 25px;
}
.view.active {
  background-color: #c8c6c4;
}
.step {
  width: 13px;
}
.zoom {
  appearance: none;
  width: 63px;
  height: 10px;
  background: linear-gradient(#999, #999) 0 50% / 100% 1px no-repeat;
}
.zoom::-webkit-slider-thumb {
  appearance: none;
  width: 3px;
  height: 8px;
  background-color: #666;
}
.percent {
  width: 35px;
  padding-left: 4px;
  font-size: 9px;
}
.fit {
  margin-left: -1px;
}

/* taskbar */
.taskbar {
  display: flex;
  flex: none;
  height: 25px;
  background-color: #02131a;
  color: #fff;
}
.start {
  width: 31px;
}
.task-search {
  display: flex;
  align-items: center;
  gap: 5px;
  width: 218px;
  padding: 0 9px 0 5px;
  background-color: #f2f2f2;
  color: #444;
}
.task-search input {
  flex: 1;
}
.task-search input::placeholder {
  color: #555;
  opacity: 1;
}
.apps {
  display: flex;
  gap: 2px;
}
.apps button {
  width: 30px;
  border-bottom: 2px solid transparent;
}
.apps .open {
  border-color: #76b9ed;
}
.apps .current {
  background-color: #3a4a50;
}
.tray {
  display: flex;
  align-items: center;
  gap: 10px;
  margin-left: auto;
  padding-right: 15px;
}
.people {
  margin-right: 5px;
}
.ime {
  font-size: 11px;
  font-weight: bold;
}
.clock {
  display: flex;
  flex-direction: column;
  align-items: center;
  margin-left: -4px;
  line-height: 12px;
}
```
